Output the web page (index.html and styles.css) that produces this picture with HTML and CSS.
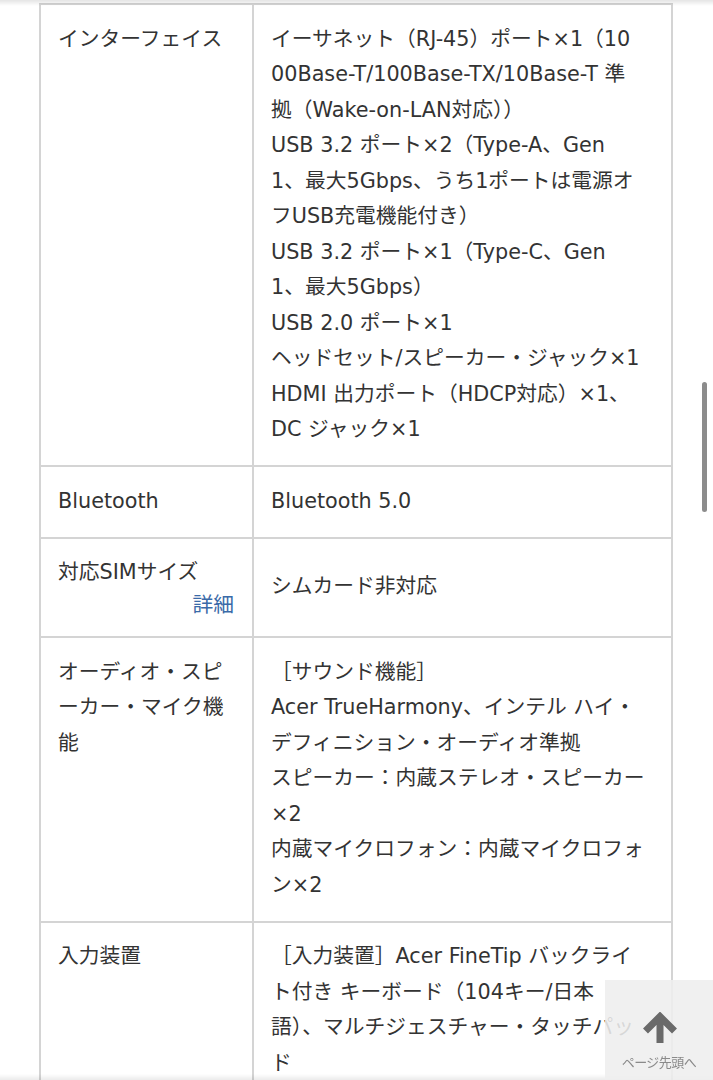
FILE: index.html
```html
<!DOCTYPE html>
<html lang="ja">
<head>
<meta charset="utf-8">
<title>仕様</title>
<link rel="stylesheet" href="styles.css">
</head>
<body>
<div class="page">
  <table class="spec">
    <tbody>
      <tr>
        <th class="label">インターフェイス</th>
        <td class="value">イーサネット（RJ-45）ポート×1（10<br>00Base-T/100Base-TX/10Base-T 準<br>拠（Wake-on-LAN対応））<br>USB 3.2 ポート×2（Type-A、Gen<br>1、最大5Gbps、うち1ポートは電源オ<br>フUSB充電機能付き）<br>USB 3.2 ポート×1（Type-C、Gen<br>1、最大5Gbps）<br>USB 2.0 ポート×1<br>ヘッドセット/スピーカー・ジャック×1<br>HDMI 出力ポート（HDCP対応）×1、<br>DC ジャック×1</td>
      </tr>
      <tr>
        <th class="label">Bluetooth</th>
        <td class="value">Bluetooth 5.0</td>
      </tr>
      <tr>
        <th class="label">対応SIMサイズ<a class="detail" href="#">詳細</a></th>
        <td class="value middle">シムカード非対応</td>
      </tr>
      <tr>
        <th class="label">オーディオ・スピ<br>ーカー・マイク機<br>能</th>
        <td class="value">［サウンド機能］<br>Acer TrueHarmony、インテル ハイ・<br>デフィニション・オーディオ準拠<br>スピーカー：内蔵ステレオ・スピーカー<br>×2<br>内蔵マイクロフォン：内蔵マイクロフォ<br>ン×2</td>
      </tr>
      <tr>
        <th class="label">入力装置</th>
        <td class="value">［入力装置］Acer FineTip バックライ<br>ト付き キーボード（104キー/日本<br>語）、マルチジェスチャー・タッチパッ<br>ド<br><br></td>
      </tr>
    </tbody>
  </table>
</div>
<div class="shade-top"></div>
<div class="shade-bottom"></div>
<div class="scrollbar"></div>
<a class="to-top" href="#">
  <svg class="to-top-icon" width="38" height="32" viewBox="0 0 38 32" aria-hidden="true">
    <path d="M19 31 V5 M4.5 19 L19 4.5 L33.5 19" fill="none" stroke="#6a6a6a" stroke-width="7" stroke-linejoin="miter" stroke-linecap="butt"/>
  </svg>
  <span class="to-top-label">ページ先頭へ</span>
</a>
</body>
</html>
```

FILE: styles.css
```css
html, body {
  margin: 0;
  padding: 0;
  background: #ffffff;
}

body {
  font-family: "DejaVu Sans", "Noto Sans CJK JP", sans-serif;
  color: #333333;
  overflow: hidden;
  height: 1080px;
}

.page {
  padding: 3px 0 0 39px;
}

.spec {
  border-collapse: separate;
  border-spacing: 0;
  border-top: 2px solid #d4d4d4;
  border-left: 2px solid #d4d4d4;
  width: 634px;
  font-size: 20.75px;
  line-height: 35.5px;
}

.spec th,
.spec td {
  border-right: 2px solid #d4d4d4;
  border-bottom: 2px solid #d4d4d4;
  vertical-align: top;
  text-align: left;
  font-weight: 400;
  white-space: nowrap;
  padding: 16.5px 18px 17.5px 17px;
}

.label {
  width: 176px;
}

.value {
  padding-left: 18px;
}

.value.middle {
  vertical-align: middle;
}

.detail {
  display: block;
  text-align: right;
  color: #3a6aa8;
  text-decoration: none;
  line-height: 28px;
}

.shade-top {
  position: fixed;
  left: 0;
  top: 0;
  width: 100%;
  height: 6px;
  background: linear-gradient(to bottom, rgba(0,0,0,0.10), rgba(0,0,0,0));
  pointer-events: none;
}

.shade-bottom {
  position: fixed;
  left: 0;
  bottom: 0;
  width: 100%;
  height: 6px;
  background: linear-gradient(to top, rgba(0,0,0,0.08), rgba(0,0,0,0));
  pointer-events: none;
}

.scrollbar {
  position: fixed;
  right: 6px;
  top: 382px;
  width: 5px;
  height: 130px;
  border-radius: 3px;
  background: #8c8c8c;
}

.to-top {
  position: fixed;
  right: 0;
  bottom: 0;
  width: 108px;
  height: 100px;
  background: rgba(238, 238, 238, 0.88);
  display: flex;
  flex-direction: column;
  align-items: center;
  text-decoration: none;
  padding-top: 32px;
  box-sizing: border-box;
}

.to-top-icon {
  display: block;
  margin-left: 2px;
}

.to-top-label {
  margin-top: 10px;
  font-family: "Noto Sans CJK JP", sans-serif;
  font-size: 13px;
  line-height: 16px;
  color: #8a8a8a;
  letter-spacing: -0.5px;
}
```
